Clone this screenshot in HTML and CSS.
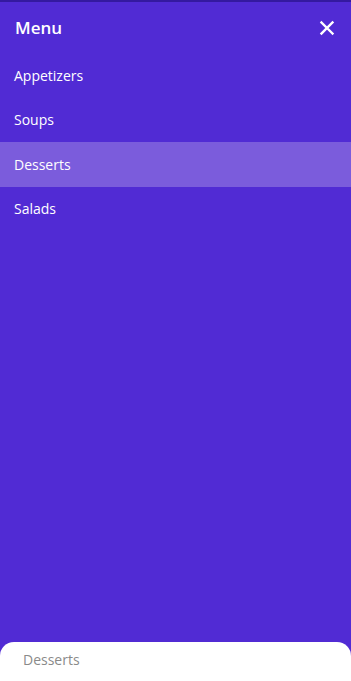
FILE: index.html
```html
<!DOCTYPE html>
<html lang="en">
<head>
    <meta charset="UTF-8">
    <meta name="viewport" content="width=device-width, initial-scale=1.0">
    <title>Menu</title>
    <link rel="stylesheet" href="styles.css">
</head>
<body>
    <div class="drawer">
        <div class="drawer-header">
            <span class="drawer-title">Menu</span>
            <button class="close-btn" aria-label="Close">
                <svg width="16" height="16" viewBox="0 0 16 16">
                    <path d="M2.5 2.5 L13.5 13.5 M13.5 2.5 L2.5 13.5" stroke="#fff" stroke-width="2.4" stroke-linecap="square"/>
                </svg>
            </button>
        </div>
        <ul class="menu-list">
            <li class="menu-item">Appetizers</li>
            <li class="menu-item">Soups</li>
            <li class="menu-item active">Desserts</li>
            <li class="menu-item">Salads</li>
        </ul>
    </div>
    <div class="bottom-sheet">
        <span class="sheet-text">Desserts</span>
    </div>
</body>
</html>
```

FILE: styles.css
```css
* {
    margin: 0;
    padding: 0;
    box-sizing: border-box;
}

body {
    height: 100vh;
    display: flex;
    flex-direction: column;
    background: #512bd4;
    border-top: 2px solid #3419a0;
    font-family: 'Open Sans', 'Noto Sans', sans-serif;
    color: #fff;
    overflow: hidden;
}

.drawer {
    flex: 1;
    display: flex;
    flex-direction: column;
}

.drawer-header {
    height: 51px;
    display: flex;
    align-items: center;
    justify-content: space-between;
    padding: 0 16px 0 15px;
}

.drawer-title {
    font-size: 17px;
    font-weight: 600;
}

.close-btn {
    background: none;
    border: none;
    display: flex;
    cursor: pointer;
}

.menu-list {
    list-style: none;
}

.menu-item {
    height: 44.5px;
    display: flex;
    align-items: center;
    padding-left: 14px;
    font-size: 14px;
}

.menu-item.active {
    background: #7b5cdc;
}

.bottom-sheet {
    height: 39px;
    background: #fff;
    border-radius: 14px 14px 0 0;
    padding: 6px 23px 0;
}

.sheet-text {
    font-size: 14px;
    color: #8a8a8a;
}
```
